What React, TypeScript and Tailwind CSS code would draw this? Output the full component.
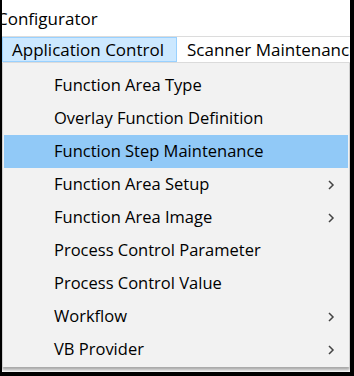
const items = [
  { label: "Function Area Type", sub: false },
  { label: "Overlay Function Definition", sub: false },
  { label: "Function Step Maintenance", sub: false, active: true },
  { label: "Function Area Setup", sub: true },
  { label: "Function Area Image", sub: true },
  { label: "Process Control Parameter", sub: false },
  { label: "Process Control Value", sub: false },
  { label: "Workflow", sub: true },
  { label: "VB Provider", sub: true },
];

function Chevron() {
  return (
    <svg width="8" height="12" viewBox="0 0 8 12" className="text-[#444]">
      <path d="M2 2 L6 6 L2 10" fill="none" stroke="currentColor" strokeWidth="1.5" />
    </svg>
  );
}

export default function App() {
  return (
    <div
      className="flex h-[376px] w-[354px] flex-col overflow-hidden bg-black pb-[4px] pl-[2px] pr-[4px]"
      style={{ fontFamily: '"Open Sans", "Noto Sans", sans-serif' }}
    >
      <div className="flex flex-1 flex-col overflow-hidden bg-white">
        <div className="flex h-[36px] items-center overflow-hidden whitespace-nowrap text-[17px] leading-none text-black">
          <span className="-ml-[5px]">Configurator</span>
        </div>
        <div className="flex h-[27px] items-stretch overflow-hidden border-y border-[#dcdcdc] whitespace-nowrap text-[17px] text-black">
          <div className="flex w-[175px] shrink-0 items-center border border-[#99d1ff] bg-[#cce8ff] pl-[9px]">
            Application Control
          </div>
          <div className="flex items-center pl-[10px]">Scanner Maintenance</div>
        </div>
        <div className="mb-[5px] flex flex-1 flex-col border-x border-[#cfcfcf] bg-[#f2f2f2] pt-[6px] shadow-[0_3px_3px_rgba(0,0,0,0.35)]">
          {items.map((it) => (
            <div
              key={it.label}
              className={
                "mx-[1px] flex h-[33px] shrink-0 items-center justify-between pl-[50px] pr-[13px] text-[16.5px] text-black " +
                (it.active ? "bg-[#91c9f7]" : "")
              }
            >
              <span>{it.label}</span>
              {it.sub && <Chevron />}
            </div>
          ))}
        </div>
      </div>
    </div>
  );
}
